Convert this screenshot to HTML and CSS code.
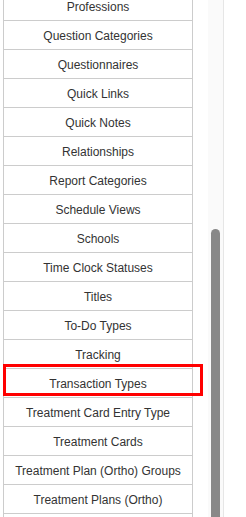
FILE: index.html
```html
<!DOCTYPE html>
<html lang="en">
<head>
    <meta charset="UTF-8">
    <meta name="viewport" content="width=device-width, initial-scale=1.0">
    <title>Lookup Tables</title>
    <link rel="stylesheet" href="styles.css">
</head>
<body>
    <div class="page">
        <div class="list">
            <div class="row">Professions</div>
            <div class="row">Question Categories</div>
            <div class="row">Questionnaires</div>
            <div class="row">Quick Links</div>
            <div class="row">Quick Notes</div>
            <div class="row">Relationships</div>
            <div class="row">Report Categories</div>
            <div class="row">Schedule Views</div>
            <div class="row">Schools</div>
            <div class="row">Time Clock Statuses</div>
            <div class="row">Titles</div>
            <div class="row">To-Do Types</div>
            <div class="row">Tracking</div>
            <div class="row selected">Transaction Types<span class="highlight"></span></div>
            <div class="row">Treatment Card Entry Type</div>
            <div class="row">Treatment Cards</div>
            <div class="row">Treatment Plan (Ortho) Groups</div>
            <div class="row">Treatment Plans (Ortho)</div>
            <div class="row blank"></div>
        </div>
        <div class="scroll-track">
            <div class="scroll-thumb"></div>
        </div>
    </div>
</body>
</html>
```
FILE: styles.css
```css
body {
    font-family: Arial, "Liberation Sans", sans-serif;
    margin: 0;
    padding: 0;
    background-color: #fff;
    overflow: hidden;
}
.page {
    display: flex;
    height: 517px;
    overflow: hidden;
}
.list {
    width: 188px;
    margin-left: 3px;
    margin-top: -8px;
    border-left: 1px solid #ccc;
    border-right: 1px solid #ccc;
    align-self: flex-start;
}
.row {
    position: relative;
    height: 26px;
    padding-top: 2px;
    line-height: 26px;
    border-bottom: 1px solid #ccc;
    text-align: center;
    font-size: 12px;
    color: #333;
    white-space: nowrap;
}
.highlight {
    position: absolute;
    left: -1px;
    top: -5px;
    width: 200px;
    height: 32px;
    border: 3px solid #f00;
    box-sizing: border-box;
}
.scroll-track {
    width: 15px;
    margin-left: 15px;
    height: 517px;
    background-color: #fafafa;
    border-right: 1px solid #e6e6e6;
}
.scroll-thumb {
    width: 9px;
    margin-left: 3px;
    margin-top: 229px;
    height: 300px;
    background-color: #888;
    border-radius: 5px 5px 0 0;
}
```
